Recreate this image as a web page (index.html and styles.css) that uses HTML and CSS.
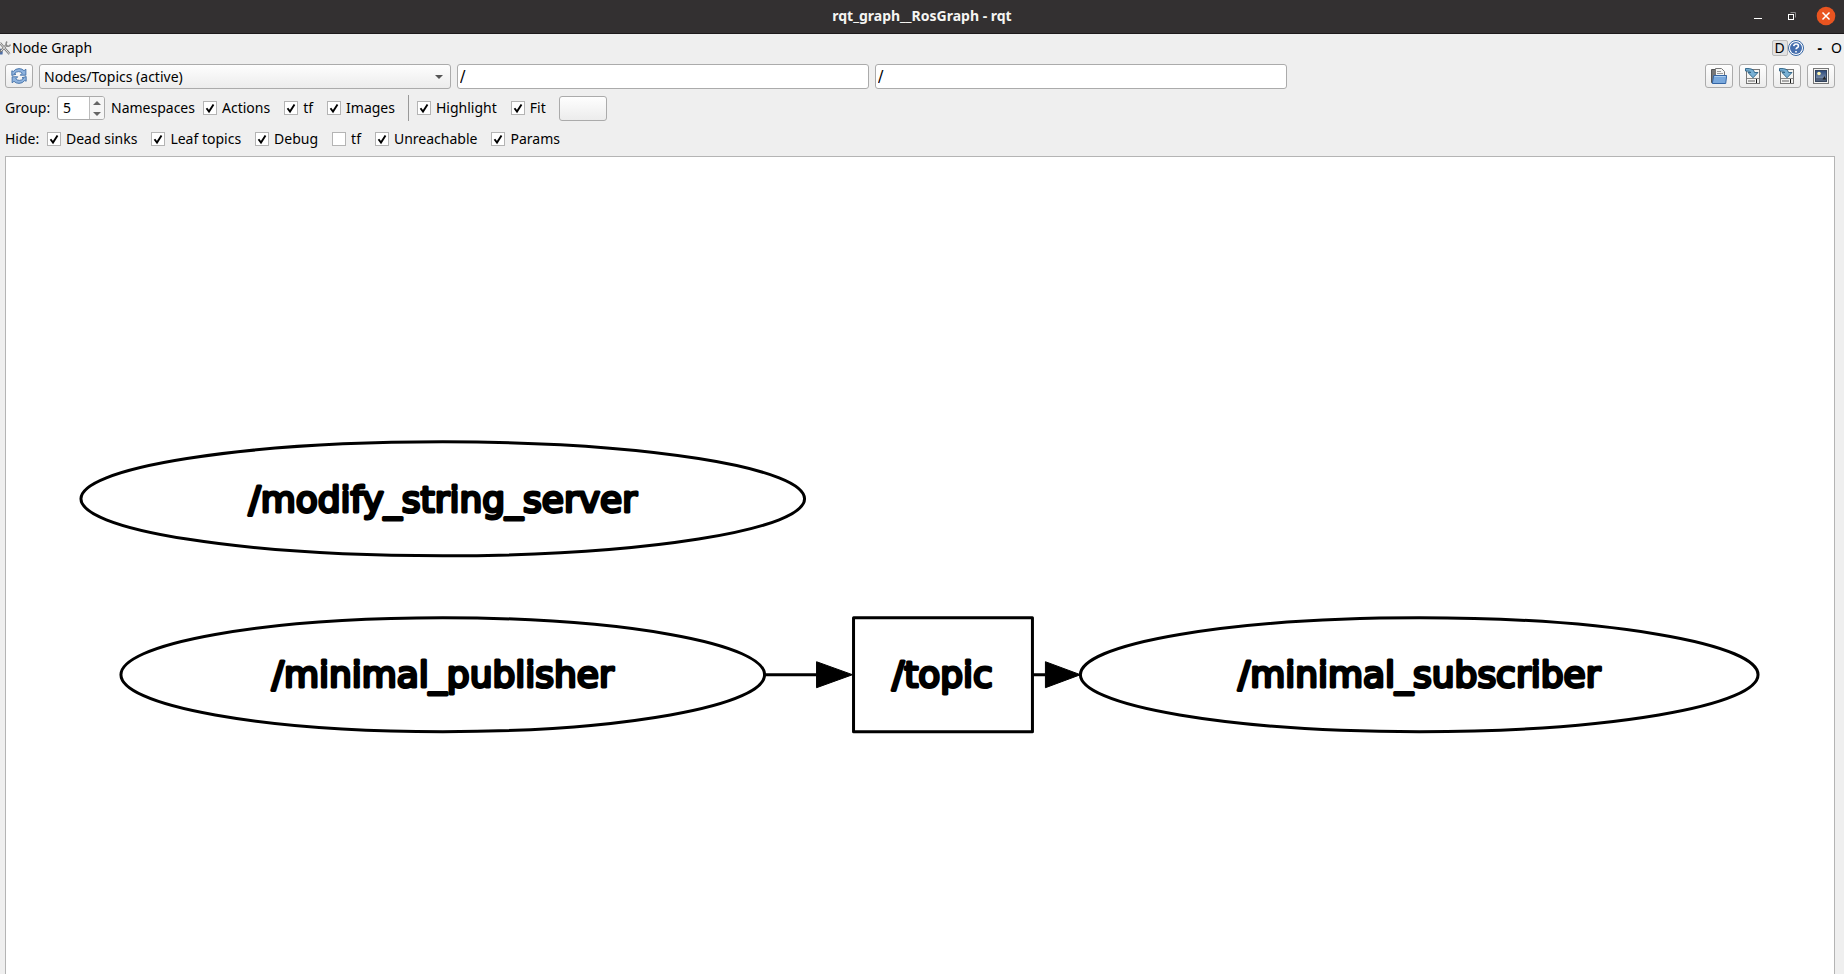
FILE: index.html
```html
<!DOCTYPE html>
<html lang="en">
<head>
<meta charset="utf-8">
<title>rqt_graph__RosGraph - rqt</title>
<link rel="stylesheet" href="styles.css">
</head>
<body>
<header class="titlebar">
  <h1 class="title">rqt_graph__RosGraph - rqt</h1>
  <div class="window-buttons">
    <button class="window-button" aria-label="Minimize"><svg width="20" height="20" viewBox="0 0 20 20"><path d="M6 12.500h8" stroke="#fff"/></svg></button>
    <button class="window-button" aria-label="Restore"><svg width="20" height="20" viewBox="0 0 20 20" fill="none"><path d="M8.500 6.500h5v5" stroke="#8b898a"/><rect x="6.500" y="8.500" width="5" height="5" stroke="#fff"/></svg></button>
    <button class="window-button" aria-label="Close"><svg width="20" height="20" viewBox="0 0 20 20"><circle cx="10" cy="10" r="9.300" fill="#e95420"/><path d="M6.500 6.500l7 7m0-7l-7 7" stroke="#fff" stroke-width="1.500"/></svg></button>
  </div>
</header>

<main class="window">
  <div class="dock">
    <svg class="dock-icon" width="11" height="16" viewBox="0 0 11 16" fill="none"><path d="M0 8.500q3.500 1 2.500 6H0z" fill="#4d6ea8"/><path d="M0 3l9.500 11M0 12l6.500-7" stroke="#777" stroke-width="2.400"/><path d="M0 3l9.500 11M1 11l5.500-6" stroke="#e4e4e4" stroke-width="1"/><path d="M7 1.500q-2 3 .3 4.500 2 .8 3.200-1.500" stroke="#888" stroke-width="1.500"/></svg>
    <h2 class="dock-title">Node Graph</h2>
    <div class="dock-buttons">
      <button class="dock-d">D</button>
      <button class="plain" aria-label="Help"><svg width="16" height="16" viewBox="0 0 16 16"><circle cx="8" cy="8" r="7.500" fill="#fff" stroke="#3465a4"/><circle cx="8" cy="8" r="6" fill="#466fae"/><path d="M5.700 6.200q.3-2.200 2.400-2.200 2.300 0 2.300 1.900 0 1.100-1.300 1.900-1 .6-1 1.500M8 11v1.600" fill="none" stroke="#fff" stroke-width="1.600"/></svg></button>
      <button class="plain dock-min">-</button>
      <button class="plain">O</button>
    </div>
  </div>

  <div class="row row-main">
    <button class="tool" aria-label="Refresh"><svg width="16" height="16" viewBox="0 0 16 16" fill="#8fb3de" stroke="#34659f" stroke-width=".8"><path d="M.8 2.800l1.600.6Q4.500.6 8 .6q3.300 0 5 2.100l1.900-1.500v6H9.200l2-2Q9.700 3.600 7.500 3.600 5 3.700 3.500 5.600L5 6.200.8 7.500z"/><path d="M15.200 13.200l-1.600-.6q-2.100 2.800-5.600 2.800-3.300 0-5-2.100l-1.900 1.500v-6h5.700l-2 2q1.500 1.600 3.700 1.600 2.500-.1 4-2L11 9.800l4.200-1.300z"/></svg></button>
    <div class="fields">
      <div class="combo">
        <select class="combo-select" aria-label="Graph type"><option>Nodes/Topics (active)</option></select>
        <svg class="combo-arrow" width="8" height="4" viewBox="0 0 8 4"><path d="M0 0h8L4 4z" fill="#555"/></svg>
      </div>
      <input class="text-field" type="text" value="/" aria-label="Node filter">
      <input class="text-field" type="text" value="/" aria-label="Topic filter">
    </div>
    <div class="tools">
      <button class="tool" aria-label="Load DOT"><svg width="16" height="16" viewBox="0 0 16 16"><path d="M.5 14.500v-13h4l1 1.500v10z" fill="#777" stroke="#555"/><path d="M4.500 9V.5h6l3 3V9z" fill="#f5f5f3" stroke="#777"/><path d="M6 3.500h4M6 5.500h6" stroke="#999"/><path d="M2.700 7.500h13l-1 8H1.300z" fill="#79a8dc" stroke="#3465a4"/><path d="M3.500 8.500h11" stroke="#a9caec"/></svg></button>
      <button class="tool" aria-label="Save DOT"><svg width="16" height="16" viewBox="0 0 16 16"><rect x="1.500" y="1.500" width="13" height="14" fill="#f4f4f2" stroke="#777"/><path d="M2 10.500h12" stroke="#888"/><path d="M3 13h7" stroke="#aaa" stroke-width="2"/><path d="M11.500 11v4" stroke="#111"/><path d="M.5.5Q9 0 9.500 4.500H13L8 9.800l-5-5.300h3Q5.500 2.800.5 3z" fill="#78b0d4" stroke="#285f83" stroke-width=".9"/></svg></button>
      <button class="tool" aria-label="Save SVG"><svg width="16" height="16" viewBox="0 0 16 16"><rect x="1.500" y="1.500" width="13" height="14" fill="#f4f4f2" stroke="#777"/><path d="M2 10.500h12" stroke="#888"/><path d="M3 13h7" stroke="#aaa" stroke-width="2"/><path d="M11.500 11v4" stroke="#111"/><path d="M.5.5Q9 0 9.500 4.500H13L8 9.800l-5-5.300h3Q5.500 2.800.5 3z" fill="#78b0d4" stroke="#285f83" stroke-width=".9"/></svg></button>
      <button class="tool" aria-label="Save image"><svg width="16" height="16" viewBox="0 0 16 16"><defs><linearGradient id="sky" x2="0" y2="1"><stop offset="0" stop-color="#2f4c7c"/><stop offset="1" stop-color="#7488a6"/></linearGradient></defs><rect x=".5" y=".5" width="15" height="15" fill="#f4f4f2" stroke="#777"/><path d="M2 2h12v12H2z" fill="#33435c"/><path d="M3 3h10v7H3z" fill="url(#sky)"/><path d="M3 10h10v3H3z" fill="#4f607a"/><circle cx="6" cy="5.500" r="1.800" fill="#fff6b0"/><path d="M9.500 11.500L11.500 8l1.500 3.500z" fill="#222"/></svg></button>
    </div>
  </div>

  <div class="row row-group">
    <label class="group-label" for="group">Group:</label>
    <div class="spin">
      <input class="spin-input" id="group" type="number" value="5">
      <div class="spin-steps">
        <button class="spin-step" aria-label="Increase"><svg width="8" height="4" viewBox="0 0 8 4"><path d="M0 4h8L4 0z" fill="#666"/></svg></button>
        <button class="spin-step" aria-label="Decrease"><svg width="8" height="4" viewBox="0 0 8 4"><path d="M0 0h8L4 4z" fill="#666"/></svg></button>
      </div>
    </div>
    <span class="namespaces">Namespaces</span>
    <div class="checks">
      <label class="check"><input type="checkbox" checked>Actions</label>
      <label class="check"><input type="checkbox" checked>tf</label>
      <label class="check"><input type="checkbox" checked>Images</label>
    </div>
    <div class="divider"></div>
    <div class="checks">
      <label class="check"><input type="checkbox" checked>Highlight</label>
      <label class="check"><input type="checkbox" checked>Fit</label>
    </div>
    <button class="tool blank" aria-label="Fit in view"></button>
  </div>

  <div class="row row-hide">
    <span class="hide-label">Hide:</span>
    <div class="checks">
      <label class="check"><input type="checkbox" checked>Dead sinks</label>
      <label class="check"><input type="checkbox" checked>Leaf topics</label>
      <label class="check"><input type="checkbox" checked>Debug</label>
      <label class="check"><input type="checkbox">tf</label>
      <label class="check"><input type="checkbox" checked>Unreachable</label>
      <label class="check"><input type="checkbox" checked>Params</label>
    </div>
  </div>

  <section class="canvas" aria-label="Graph">
    <svg class="graph" viewBox="0 0 1829 817" preserveAspectRatio="xMidYMin meet">
      <g class="shapes">
        <ellipse cx="437" cy="342" rx="362" ry="57"/>
        <ellipse cx="437" cy="518" rx="322" ry="57"/>
        <rect x="848" y="461" width="179" height="114"/>
        <ellipse cx="1414" cy="518" rx="339" ry="57"/>
        <path d="M759 518h52M1027 518h13"/>
      </g>
      <path d="M811 505v26l36-13zM1040 505v26l35-13z" stroke="#000"/>
      <g class="names">
        <text x="437" y="355">/modify_string_server</text>
        <text x="437" y="530">/minimal_publisher</text>
        <text x="937" y="530">/topic</text>
        <text x="1414" y="530">/minimal_subscriber</text>
      </g>
    </svg>
  </section>
</main>
</body>
</html>
```
FILE: styles.css
```css
* {
  box-sizing: border-box;
}

body {
  margin: 0;
  height: 100vh;
  display: flex;
  flex-direction: column;
  overflow: hidden;
  background: #efefef;
  color: #000;
  font: 14px/20px "Noto Sans", sans-serif;
}

button,
input,
select {
  font: inherit;
  color: inherit;
  margin: 0;
  padding: 0;
}

svg {
  display: block;
  flex: none;
}

.titlebar {
  display: grid;
  grid-template-columns: 1fr auto 1fr;
  align-items: center;
  height: 34px;
  padding: 0 8px 2px;
  background: #333031;
  border-bottom: 1px solid #1d191b;
}

.title {
  grid-column: 2;
  margin: 0;
  font-size: 14px;
  line-height: 20px;
  color: #f5f5f3;
}

.window-buttons {
  display: flex;
  justify-content: flex-end;
  gap: 14px;
}

.window-button,
.plain {
  border: 0;
  background: none;
}

.window {
  flex: 1;
  min-height: 0;
  display: flex;
  flex-direction: column;
}

.dock {
  display: flex;
  align-items: center;
  height: 28px;
  padding-right: 2px;
}

.dock-title {
  flex: 1;
  margin: 0 0 0 1px;
  font-size: 14px;
  font-weight: 400;
}

.dock-buttons {
  display: flex;
  align-items: center;
}

.dock-d {
  width: 16px;
  height: 16px;
  border: 1px solid #bcbcbc;
  border-radius: 2px;
  background: #e2e2e2;
  line-height: 14px;
}

.dock-min {
  margin: 0 9px 0 14px;
  font-weight: 700;
}

.row {
  display: flex;
  align-items: center;
  padding: 0 9px 0 5px;
}

.row-main {
  align-items: flex-start;
  gap: 6px;
  padding-top: 2px;
}

.fields {
  flex: 1;
  display: grid;
  grid-template-columns: repeat(4, 1fr);
  gap: 6px;
  margin-right: -6px;
}

.combo,
.text-field {
  min-width: 0;
  height: 25px;
  border: 1px solid #ababab;
  border-radius: 3px;
  background: #fff;
}

.text-field {
  padding: 0 2px;
  font: 16px "DejaVu Sans", sans-serif;
}

.combo {
  display: grid;
  align-items: center;
  background: linear-gradient(#fefefe, #ececec);
}

.combo-select {
  grid-area: 1 / 1;
  appearance: none;
  width: 100%;
  height: 23px;
  padding: 0 20px 0 4px;
  border: 0;
  background: none;
}

.combo-arrow {
  grid-area: 1 / 1;
  justify-self: end;
  margin-right: 7px;
  pointer-events: none;
}

.tools {
  display: flex;
  gap: 6px;
}

.tool {
  display: flex;
  align-items: center;
  justify-content: center;
  width: 28px;
  height: 24px;
  border: 1px solid #ababab;
  border-radius: 3px;
  background: linear-gradient(#fefefe, #ececec);
}

.blank {
  width: 48px;
  height: 25px;
  margin-left: 13px;
}

.row-group {
  height: 38px;
}

.group-label {
  width: 52px;
}

.spin {
  display: flex;
  width: 48px;
  height: 24px;
  border: 1px solid #ababab;
  border-radius: 3px;
  background: #fff;
  overflow: hidden;
}

.spin-input {
  flex: 1;
  min-width: 0;
  padding-left: 5px;
  border: 0;
  background: none;
  appearance: textfield;
}

.spin-input::-webkit-inner-spin-button {
  appearance: none;
}

.spin-steps {
  display: flex;
  flex-direction: column;
  width: 15px;
  border-left: 1px solid #bcbcbc;
  background: #f6f6f6;
}

.spin-step {
  flex: 1;
  display: flex;
  align-items: center;
  justify-content: center;
  border: 0;
  background: none;
}

.namespaces {
  width: 92px;
  margin-left: 6px;
}

.checks {
  display: flex;
  gap: 14px;
}

.check {
  display: flex;
  align-items: center;
  gap: 5px;
}

.check input {
  appearance: none;
  width: 14px;
  height: 14px;
  border: 1px solid #b4b4b4;
  background: #fff;
}

.check input:checked {
  background: #fff url("data:image/svg+xml,%3Csvg xmlns='http://www.w3.org/2000/svg' viewBox='0 0 12 12'%3E%3Cpath d='M2.500 6.200L5 9.500 9.500 2.500' fill='none' stroke='%23000' stroke-width='1.900'/%3E%3C/svg%3E") center / 12px 12px;
}

.divider {
  width: 1px;
  height: 26px;
  margin: 0 8px 0 13px;
  background: #999;
}

.row-hide {
  height: 24px;
}

.hide-label {
  width: 42px;
}

.canvas {
  flex: 1;
  min-height: 0;
  margin: 5px 9px 0 5px;
  border: 1px solid #b4b4b4;
  border-bottom: 0;
  background: #fff;
}

.graph {
  width: 100%;
  height: 100%;
}

.shapes {
  fill: none;
  stroke: #000;
  stroke-width: 3px;
  stroke-linejoin: round;
}

.names {
  font: 36px "DejaVu Sans", sans-serif;
  text-anchor: middle;
  stroke: #000;
  stroke-width: 3px;
  stroke-linejoin: round;
}
```
